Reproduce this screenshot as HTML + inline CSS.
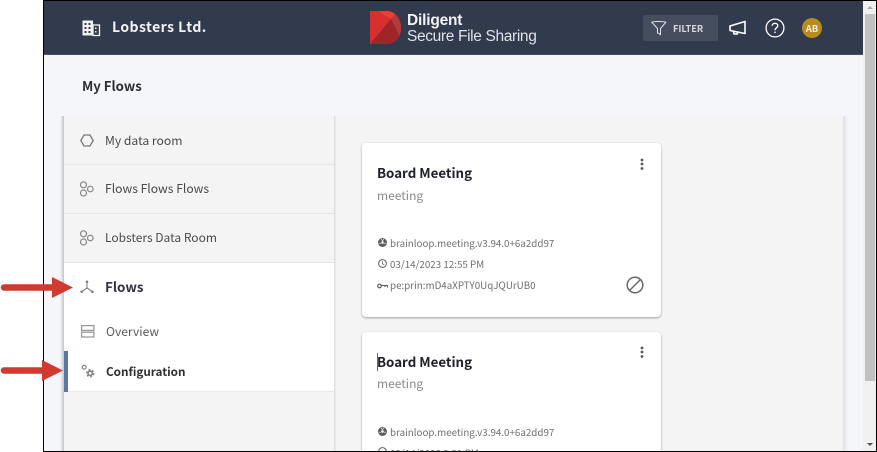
<!DOCTYPE html>
<html><head><meta charset="utf-8">
<style>
*{box-sizing:border-box}
html,body{margin:0;padding:0;width:877px;height:452px;overflow:hidden;background:#fff;font-family:"Liberation Sans",sans-serif}
.a{position:absolute;white-space:nowrap}
.n{font-family:"Noto Sans CJK JP","Liberation Sans",sans-serif;line-height:18px}
svg{position:absolute;overflow:visible}
#root{position:absolute;left:0;top:0;width:877px;height:452px;overflow:hidden}
.item{position:absolute;left:64px;width:270px;background:#f4f4f4;border-bottom:1px solid #e6e6e6}
.t{font-size:12.150px;color:#4a4a4a}
.card{position:absolute;left:362px;width:299px;background:#fff;border-radius:4px;box-shadow:0 1px 2px rgba(0,0,0,.35)}
.ttl{font-size:13.300px;color:#1d1f29}
.sub{font-size:12px;color:#8a8a8a}
.meta{font-size:9.800px;color:#6f6f73}
</style></head><body>
<div id="root">
<div class="a" style="left:43px;top:0;width:834px;height:452px;background:#f5f6f9"></div>
<!-- header -->
<div class="a" style="left:44px;top:1px;width:819px;height:54px;background:#323a4e;border-bottom:1px solid #4a5163"></div>
<svg style="left:82px;top:20px" width="18" height="16" viewBox="0 0 18 16">
<rect x="0.5" y="0.5" width="10.5" height="15" fill="#f2f2f2"/><rect x="11" y="5" width="6.5" height="10.5" fill="none" stroke="#f2f2f2" stroke-width="1.3"/>
<g fill="#323a4e"><rect x="2.5" y="3" width="2" height="2"/><rect x="6.5" y="3" width="2" height="2"/><rect x="2.5" y="7" width="2" height="2"/><rect x="6.5" y="7" width="2" height="2"/><rect x="2.5" y="11" width="2" height="2"/><rect x="6.5" y="11" width="2" height="2"/></g>
<g fill="#f2f2f2"><rect x="13" y="7.5" width="1.5" height="1.5"/><rect x="13" y="11" width="1.5" height="1.5"/></g></svg>
<div class="a n" style="left:112px;top:18px;font-size:14px;font-weight:bold;color:#f2f3f5;letter-spacing:.45px">Lobsters Ltd.</div>
<!-- logo -->
<svg style="left:370px;top:11px" width="32" height="34" viewBox="0 0 32 34">
<path d="M0 0H16C26 0 31 8 31 17C31 26 26 33 16 33H0Z" fill="#d32f2f"/>
<path d="M0 0H16C20 0 23 1 25 3L0 33Z" fill="#d9302f"/>
<path d="M8 0H16C20 0 23 1.500 25 3.500L21 8Z" fill="#ee3d36"/>
<path d="M21 8L25 3.500C29 7 31 12 31 17C31 20 30.500 22 29.500 24.500Z" fill="#b73a3a"/>
<path d="M0 33L21 8L29.500 24.500C27.500 30 23 33 16 33Z" fill="#9e2626"/></svg>
<div class="a" style="left:407px;top:12px;font-size:15.5px;font-weight:bold;color:#f3f3f3;letter-spacing:-.2px">Diligent</div>
<div class="a" style="left:407px;top:28px;font-size:15.500px;color:#dfe1e5;letter-spacing:-.35px">Secure File Sharing</div>
<!-- filter -->
<div class="a" style="left:643px;top:15px;width:75px;height:26px;background:#464d5f;border-radius:2px"></div>
<svg style="left:651px;top:21px" width="16" height="15" viewBox="0 0 16 15"><path d="M.8 1.200C3 .2 12 .2 14.800 1.200L9.500 7.500V13.500L6.500 11.800V7.500Z" fill="none" stroke="#e8e9ec" stroke-width="1"/></svg>
<div class="a n" style="left:673px;top:19px;font-size:9.200px;font-weight:bold;color:#d6d8de">FILTER</div>
<svg style="left:729px;top:20px" width="18" height="16" viewBox="0 0 18 16"><path d="M1 6L16 1.500V13.500L1 10.500Z M4.500 11L5 14H8.500L8 12" fill="none" stroke="#fff" stroke-width="1.600" stroke-linejoin="round"/></svg>
<svg style="left:765px;top:18px" width="20" height="20" viewBox="0 0 20 20"><circle cx="10" cy="10" r="8.900" fill="none" stroke="#fff" stroke-width="1.300"/><path d="M7.200 7.800C7.200 4.500 12.800 4.500 12.800 7.800C12.800 10 10 9.800 10 12.300" fill="none" stroke="#fff" stroke-width="1.300"/><rect x="9.300" y="13.600" width="1.400" height="1.500" fill="#fff"/></svg>
<div class="a n" style="left:802px;top:18px;width:20px;height:20px;border-radius:50%;background:#b98a1f;color:#f5f0e0;font-size:9.500px;font-weight:bold;text-align:center;line-height:20px">AB</div>
<!-- scrollbar -->
<div class="a" style="left:863px;top:1px;width:13px;height:450px;background:#f0f0f0"></div>
<div class="a" style="left:865px;top:14px;width:10px;height:367px;background:#c1c1c1"></div>
<svg style="left:866px;top:5px" width="8" height="5"><path d="M1 4L4 1L7 4Z" fill="#a8a8a8"/></svg>
<svg style="left:866px;top:442px" width="8" height="5"><path d="M1 1L4 4L7 1Z" fill="#505050"/></svg>
<div class="a n" style="left:82px;top:77px;font-size:13.200px;font-weight:bold;color:#2c2e36">My Flows</div>
<!-- content bg -->
<div class="a" style="left:334px;top:116px;width:509px;height:335px;background:#f4f4f4"></div>
<div class="a" style="left:843px;top:116px;width:5px;height:335px;background:linear-gradient(90deg,#dfe0e3,#f5f6f9)"></div>
<!-- sidebar -->
<div class="a" style="left:60px;top:116px;width:4px;height:335px;background:linear-gradient(90deg,#f5f6f9,#c4c5c8)"></div>
<div class="a" style="left:64px;top:116px;width:270px;height:335px;background:#f4f4f4"></div>
<div class="item" style="top:116px;height:49px"></div>
<div class="item" style="top:165px;height:49px"></div>
<div class="item" style="top:214px;height:49px"></div>
<div class="a" style="left:64px;top:263px;width:270px;height:129px;background:#fff;border-bottom:1px solid #e8e8e8"></div>
<div class="a" style="left:64px;top:351px;width:4px;height:41px;background:#5e76a5"></div>
<div class="a" style="left:334px;top:116px;width:2px;height:335px;background:linear-gradient(90deg,#d8d8d8,#f0f0f0)"></div>
<svg style="left:80px;top:134px" width="14" height="13" viewBox="0 0 14 13"><path d="M4 1H10L13.200 6.500L10 12H4L.8 6.500Z" fill="none" stroke="#777" stroke-width="1.300"/></svg>
<div class="a n t" style="left:105px;top:132px">My data room</div>
<svg style="left:79px;top:181px" width="15" height="16" viewBox="0 0 15 16"><g fill="none" stroke="#888" stroke-width="1.200"><circle cx="4.500" cy="3.800" r="3"/><circle cx="4.500" cy="12" r="3"/><circle cx="11.300" cy="8" r="2.800"/></g></svg>
<div class="a n t" style="left:105px;top:180px">Flows Flows Flows</div>
<svg style="left:79px;top:230px" width="15" height="16" viewBox="0 0 15 16"><g fill="none" stroke="#888" stroke-width="1.200"><circle cx="4.500" cy="3.800" r="3"/><circle cx="4.500" cy="12" r="3"/><circle cx="11.300" cy="8" r="2.800"/></g></svg>
<div class="a n t" style="left:105px;top:229px;font-size:12px">Lobsters Data Room</div>
<svg style="left:80px;top:280px" width="14" height="14" viewBox="0 0 14 14"><path d="M7 2V8M7 8L1.800 11.500M7 8L12.200 11.500" fill="none" stroke="#808080" stroke-width="1.100"/><g fill="#808080"><circle cx="7" cy="1.800" r="1.300"/><circle cx="1.600" cy="11.800" r="1.300"/><circle cx="12.400" cy="11.800" r="1.300"/></g></svg>
<div class="a n" style="left:105px;top:277px;font-size:13.400px;font-weight:bold;color:#33333b">Flows</div>
<svg style="left:81px;top:325px" width="14" height="13" viewBox="0 0 14 13"><g fill="none" stroke="#9a9a9a" stroke-width="1.300"><rect x=".6" y=".6" width="12.300" height="4.800"/><rect x=".6" y="7.200" width="12.300" height="4.800"/></g></svg>
<div class="a n" style="left:106px;top:323px;font-size:12.100px;color:#5a5a5a">Overview</div>
<svg style="left:81px;top:364px" width="14" height="14" viewBox="0 0 14 14"><circle cx="3.200" cy="3.200" r="1.900" fill="none" stroke="#808080" stroke-width="1.200"/><circle cx="9.200" cy="9.300" r="2.200" fill="none" stroke="#808080" stroke-width="1.600"/><circle cx="9.200" cy="9.300" r="3.600" fill="none" stroke="#808080" stroke-width="1.300" stroke-dasharray="1.900 1.870"/></svg>
<div class="a n" style="left:106px;top:363px;font-size:11.700px;font-weight:bold;color:#2e2e35">Configuration</div>
<!-- card 1 -->
<div class="card" style="top:143px;height:174px"></div>
<div class="a n ttl" style="left:377px;top:164px;font-weight:bold">Board Meeting</div>
<div class="a n sub" style="left:377px;top:187px">meeting</div>
<svg style="left:640px;top:158px" width="4" height="13"><g fill="#555"><circle cx="2" cy="2" r="1.400"/><circle cx="2" cy="6" r="1.400"/><circle cx="2" cy="10.500" r="1.400"/></g></svg>
<svg style="left:378px;top:238px" width="9" height="9" viewBox="0 0 9 9"><circle cx="4.500" cy="4.500" r="4.500" fill="#5c5c60"/><circle cx="4.500" cy="4.500" r="1.300" fill="#fff"/><path d="M4.500 3L3 .8M4.500 3L6 .8M3 5.200L.8 5.200M6 5.200L8.200 5.200" stroke="#fff" stroke-width=".6"/></svg>
<div class="a n meta" style="left:390px;top:234px">brainloop.meeting.v3.94.0+6a2dd97</div>
<svg style="left:378px;top:259px" width="9" height="9" viewBox="0 0 9 9"><circle cx="4.500" cy="4.500" r="3.900" fill="none" stroke="#5c5c60"/><path d="M4.500 2.200V4.800L6.300 5.800" fill="none" stroke="#5c5c60" stroke-width=".8"/></svg>
<div class="a n meta" style="left:390px;top:255px">03/14/2023 12:55 PM</div>
<svg style="left:377px;top:283px" width="11" height="6" viewBox="0 0 11 6"><circle cx="2.500" cy="3" r="1.800" fill="none" stroke="#5c5c60" stroke-width="1.200"/><path d="M4.500 2.500H10.500V4.500M8 2.500V4" fill="none" stroke="#5c5c60" stroke-width="1.100"/></svg>
<div class="a n meta" style="left:390px;top:276px">pe:prin:mD4aXPTY0UqJQUrUB0</div>
<svg style="left:626px;top:276px" width="18" height="18" viewBox="0 0 18 18"><circle cx="9" cy="9" r="7.800" fill="none" stroke="#666" stroke-width="1.500"/><path d="M3.500 14.500L14.500 3.500" stroke="#666" stroke-width="1.500"/></svg>
<!-- card 2 -->
<div class="card" style="top:332px;height:130px"></div>
<div class="a" style="left:376.500px;top:353px;width:1.500px;height:18px;background:#666"></div>
<div class="a n ttl" style="left:377px;top:353px;font-weight:bold">Board Meeting</div>
<div class="a n sub" style="left:377px;top:375px">meeting</div>
<svg style="left:640px;top:346px" width="4" height="13"><g fill="#555"><circle cx="2" cy="2" r="1.400"/><circle cx="2" cy="6" r="1.400"/><circle cx="2" cy="10.500" r="1.400"/></g></svg>
<svg style="left:378px;top:427px" width="9" height="9" viewBox="0 0 9 9"><circle cx="4.500" cy="4.500" r="4.500" fill="#5c5c60"/><circle cx="4.500" cy="4.500" r="1.300" fill="#fff"/><path d="M4.500 3L3 .8M4.500 3L6 .8M3 5.200L.8 5.200M6 5.200L8.200 5.200" stroke="#fff" stroke-width=".6"/></svg>
<div class="a n meta" style="left:390px;top:423px">brainloop.meeting.v3.94.0+6a2dd97</div>
<svg style="left:378px;top:447px" width="9" height="9" viewBox="0 0 9 9"><circle cx="4.500" cy="4.500" r="3.900" fill="none" stroke="#5c5c60"/></svg>
<div class="a n meta" style="left:390px;top:444px">03/14/2023 2:01 PM</div>
<!-- black frame edges -->
<div class="a" style="left:43px;top:0;width:834px;height:1px;background:#000"></div>
<div class="a" style="left:43px;top:451px;width:834px;height:1px;background:#000"></div>
<div class="a" style="left:43px;top:0;width:1px;height:452px;background:#000"></div>
<div class="a" style="left:876px;top:0;width:1px;height:452px;background:#000"></div>
<!-- arrows -->
<svg style="left:0;top:275px" width="75" height="110" viewBox="0 0 75 110">
<path d="M4 12.500H53" stroke="#cf3b30" stroke-width="6.500" stroke-linecap="round"/><path d="M52 2L73 12.500L52 23Z" fill="#cf3b30"/>
<path d="M4 95.500H43" stroke="#cf3b30" stroke-width="6.500" stroke-linecap="round"/><path d="M42 85L63 95.500L42 106Z" fill="#cf3b30"/>
</svg>
</div>
</body></html>
